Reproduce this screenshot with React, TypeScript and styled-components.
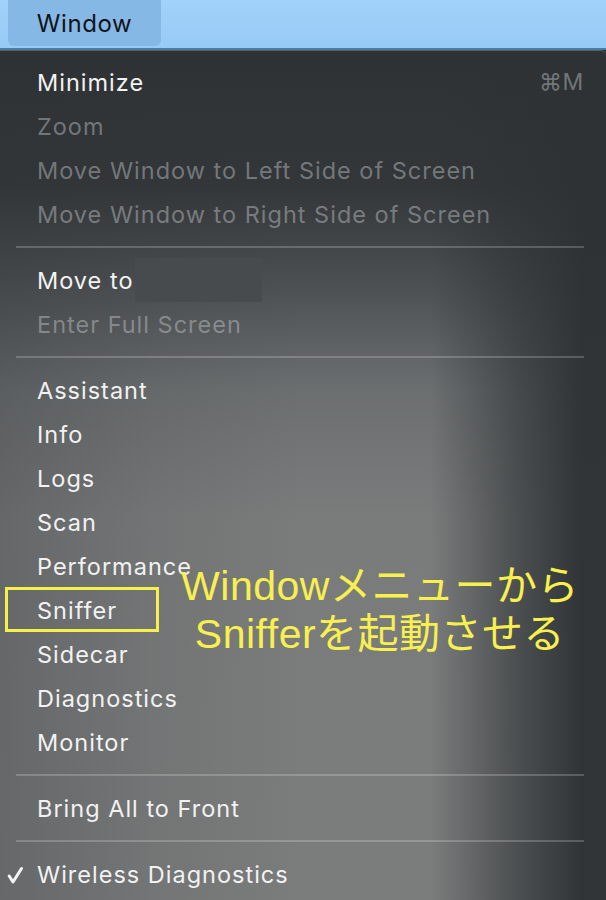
import React from "react";
import styled, { createGlobalStyle } from "styled-components";

const GlobalStyle = createGlobalStyle`
  html, body {
    margin: 0;
    padding: 0;
    background: #2e3234;
  }
  body {
    font-family: Inter, "Noto Sans", sans-serif;
    -webkit-font-smoothing: antialiased;
  }
`;

const Screen = styled.div`
  width: 606px;
  height: 900px;
  overflow: hidden;
  display: flex;
  flex-direction: column;
`;

const MenuBar = styled.div`
  height: 48px;
  flex-shrink: 0;
  display: flex;
  align-items: stretch;
  padding-left: 8px;
  background: linear-gradient(#a0d2fb, #97caf5);
  border-bottom: 2px solid #4a7ca8;
`;

const BarTitle = styled.div`
  width: 153px;
  display: flex;
  align-items: center;
  justify-content: center;
  margin-bottom: 2px;
  border-radius: 0 0 6px 6px;
  background: #86b8e5;
  color: #111418;
  font-size: 24px;
  letter-spacing: 0.6px;
`;

const Menu = styled.div`
  position: relative;
  flex: 1;
  padding: 9px 0 0;
  border-top: 1px solid #5a5e60;
  border-top-right-radius: 6px;
  background:
    linear-gradient(to right, rgba(46, 50, 52, 0) 71%, rgba(46, 50, 52, 0.6) 85%, rgba(46, 50, 52, 0.97) 96%),
    linear-gradient(to right, rgba(46, 50, 52, 0.28) 0%, rgba(46, 50, 52, 0.1) 25%, rgba(46, 50, 52, 0) 50%),
    linear-gradient(to bottom, #2e3234 0%, #33373a 16%, #4d5153 28%, #6c6f70 40%, #7a7c7c 55%, #7b7d7d 100%);
`;

const Item = styled.div<{ $disabled?: boolean; $marked?: boolean }>`
  position: relative;
  height: 44px;
  display: flex;
  align-items: center;
  padding: 0 22px 0 37px;
  font-size: 23.5px;
  letter-spacing: 1px;
  color: ${({ $disabled }) => ($disabled ? "rgba(200, 204, 206, 0.45)" : "#f2f2f2")};

  ${({ $marked }) =>
    $marked &&
    `
    &::before {
      content: "";
      position: absolute;
      left: 5px;
      top: -1px;
      width: 148px;
      height: 39px;
      border: 3px solid #f6ef4c;
    }
  `}
`;

const Label = styled.span`
  flex: 1;
  display: flex;
  align-items: center;
`;

const Shortcut = styled.span`
  color: rgba(200, 204, 206, 0.45);
  font-size: 23px;
  letter-spacing: 0.6px;
`;

const Check = styled.span`
  position: absolute;
  left: 7px;
  top: 14px;
  width: 16px;
  height: 18px;
  display: flex;
`;

const Redacted = styled.span`
  display: inline-block;
  width: 127px;
  height: 44px;
  margin-left: 2px;
  background: #474b4e;
`;

const Separator = styled.div`
  height: 22px;
  display: flex;
  align-items: center;
  padding: 0 22px 0 16px;

  &::after {
    content: "";
    flex: 1;
    height: 2px;
    background: rgba(255, 255, 255, 0.2);
  }
`;

const Annotation = styled.div`
  position: absolute;
  left: 165px;
  top: 511px;
  width: 430px;
  text-align: center;
  color: #f7f04e;
  font-family: "Liberation Sans", "Noto Sans CJK JP", sans-serif;
  font-size: 41px;
  line-height: 48px;
  letter-spacing: 0.5px;
`;

type Entry =
  | { kind: "sep" }
  | { kind: "item"; label: string; disabled?: boolean; shortcut?: string; marked?: boolean; checked?: boolean; redact?: boolean };

const entries: Entry[] = [
  { kind: "item", label: "Minimize", shortcut: "⌘M" },
  { kind: "item", label: "Zoom", disabled: true },
  { kind: "item", label: "Move Window to Left Side of Screen", disabled: true },
  { kind: "item", label: "Move Window to Right Side of Screen", disabled: true },
  { kind: "sep" },
  { kind: "item", label: "Move to", redact: true },
  { kind: "item", label: "Enter Full Screen", disabled: true },
  { kind: "sep" },
  { kind: "item", label: "Assistant" },
  { kind: "item", label: "Info" },
  { kind: "item", label: "Logs" },
  { kind: "item", label: "Scan" },
  { kind: "item", label: "Performance" },
  { kind: "item", label: "Sniffer", marked: true },
  { kind: "item", label: "Sidecar" },
  { kind: "item", label: "Diagnostics" },
  { kind: "item", label: "Monitor" },
  { kind: "sep" },
  { kind: "item", label: "Bring All to Front" },
  { kind: "sep" },
  { kind: "item", label: "Wireless Diagnostics", checked: true },
];

const CheckMark = () => (
  <svg width="16" height="18" viewBox="0 0 16 18">
    <path d="M2.2 10 L6 16 L14.5 2.5" fill="none" stroke="#f4f4f4" strokeWidth="3" strokeLinecap="round" strokeLinejoin="round" />
  </svg>
);

const App = () => {
  return (
    <Screen>
      <GlobalStyle />
      <MenuBar>
        <BarTitle>Window</BarTitle>
      </MenuBar>
      <Menu>
        {entries.map((e, i) =>
          e.kind === "sep" ? (
            <Separator key={i} />
          ) : (
            <Item key={i} $disabled={e.disabled} $marked={e.marked}>
              {e.checked && (
                <Check>
                  <CheckMark />
                </Check>
              )}
              <Label>
                {e.label}
                {e.redact && <Redacted />}
              </Label>
              {e.shortcut && <Shortcut>{e.shortcut}</Shortcut>}
            </Item>
          )
        )}
        <Annotation>
          Windowメニューから
          <br />
          Snifferを起動させる
        </Annotation>
      </Menu>
    </Screen>
  );
};

export default App;
